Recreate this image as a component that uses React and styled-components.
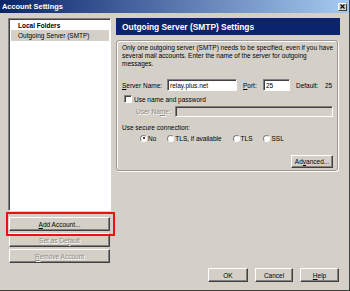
import styled, {createGlobalStyle} from 'styled-components'

const Global = createGlobalStyle`
    html, body {
        margin: 0;
        padding: 0;
        background: #d4d0c8;
    }
    body {
        font-family: "Liberation Sans", Arial, sans-serif;
    }
`

const Window = styled.div`
    width: 350px;
    height: 291px;
    box-sizing: border-box;
    display: flex;
    flex-direction: column;
    background: #d4d0c8;
    border-right: 1px solid #404040;
    border-bottom: 1px solid #404040;
    font-size: 6.5px;
    color: #000;
    overflow: hidden;
`

const TitleBar = styled.div`
    height: 13px;
    flex: none;
    display: flex;
    align-items: center;
    justify-content: space-between;
    padding: 0 2px 0 2px;
    background: linear-gradient(to right, #0a246a, #a6caf0);
    color: #fff;
    font-weight: bold;
    font-size: 7.4px;
`

const CloseBox = styled.div`
    width: 9px;
    height: 8px;
    box-sizing: border-box;
    background: #d4d0c8;
    border: 1px solid;
    border-color: #fff #404040 #404040 #fff;
    display: grid;
    place-items: center;
`

const Content = styled.div`
    flex: 1;
    display: flex;
    gap: 5px;
    padding: 5px 10px 8px 8px;
    min-height: 0;
`

const LeftColumn = styled.div`
    width: 103px;
    flex: none;
    display: flex;
    flex-direction: column;
`

const List = styled.div`
    flex: 1;
    background: #fff;
    border: 1px solid;
    border-color: #808080 #fff #fff #808080;
    box-shadow: inset 1px 1px #404040;
    padding: 2px 1px 0 2px;
`

const ListItem = styled.div`
    height: ${p => p.bold ? 9 : 11}px;
    line-height: ${p => p.bold ? 9 : 11}px;
    padding-left: 7px;
    font-weight: ${p => p.bold ? 'bold' : 'normal'};
    background: ${p => p.selected ? '#d4d0c8' : 'transparent'};
`

const ButtonStack = styled.div`
    display: flex;
    flex-direction: column;
    gap: 2px;
    margin: 6px 1px 19px 1px;
`

const Highlight = styled.div`
    position: relative;
`

const RedBox = styled.div`
    position: absolute;
    left: -3px;
    right: -5px;
    top: -5px;
    bottom: -5px;
    border: 2px solid #f01010;
    pointer-events: none;
`

const Button = styled.div`
    height: ${p => p.h || 14}px;
    width: ${p => p.w ? p.w + 'px' : 'auto'};
    box-sizing: border-box;
    display: flex;
    align-items: center;
    justify-content: center;
    background: #d4d0c8;
    border: 1px solid;
    border-color: #fff #404040 #404040 #fff;
    box-shadow: inset -1px -1px #808080;
    color: ${p => p.disabled ? '#8c8a84' : '#000'};
    text-shadow: ${p => p.disabled ? '1px 1px 0 #fff' : 'none'};
    flex: none;
`

const RightColumn = styled.div`
    flex: 1;
    display: flex;
    flex-direction: column;
`

const Header = styled.div`
    height: 17px;
    flex: none;
    background: #0c2470;
    color: #fff;
    font-size: 8.4px;
    font-weight: bold;
    display: flex;
    align-items: center;
    padding-left: 6px;
`

const Group = styled.div`
    margin: 5px 2px 0 0;
    border: 1px solid #9a9890;
    box-shadow: 1px 1px 0 #fff, inset 1px 1px 0 #fff;
    border-radius: 3px;
    padding: 3px 4px 2px 5px;
    display: flex;
    flex-direction: column;
`

const Para = styled.p`
    margin: 0;
    line-height: 8px;
    white-space: nowrap;
`

const Row = styled.div`
    display: flex;
    align-items: center;
    height: ${p => p.h || 8}px;
    margin-top: ${p => p.mt || 0}px;
    padding-left: ${p => p.pl || 0}px;
`

const Label = styled.span`
    width: ${p => p.w ? p.w + 'px' : 'auto'};
    margin-left: ${p => p.ml || 0}px;
    color: ${p => p.disabled ? '#8c8a84' : '#000'};
    text-shadow: ${p => p.disabled ? '1px 1px 0 #fff' : 'none'};
    flex: none;
    white-space: nowrap;
`

const Input = styled.div`
    height: ${p => p.h || 12}px;
    width: ${p => p.w ? p.w + 'px' : 'auto'};
    flex: ${p => p.w ? 'none' : 1};
    box-sizing: border-box;
    background: ${p => p.disabled ? '#d4d0c8' : '#fff'};
    border: 1px solid;
    border-color: #808080 #fff #fff #808080;
    box-shadow: inset 1px 1px #404040;
    padding-left: 2px;
    display: flex;
    align-items: center;
`

const Check = styled.div`
    width: 8px;
    height: 8px;
    box-sizing: border-box;
    background: #fff;
    border: 1px solid;
    border-color: #808080 #fff #fff #808080;
    box-shadow: inset 1px 1px #404040;
    margin: 0 2px 0 2px;
    flex: none;
`

const RadioGroup = styled.div`
    display: flex;
    align-items: center;
    gap: 11px;
`

const RadioItem = styled.label`
    display: flex;
    align-items: center;
    gap: 1px;
`

const Radio = styled.span`
    width: 7px;
    height: 7px;
    border-radius: 50%;
    box-sizing: border-box;
    background: #fff;
    border: 1px solid;
    border-color: #808080 #fff #fff #808080;
    display: grid;
    place-items: center;
    &::after {
        content: '';
        width: 2px;
        height: 2px;
        border-radius: 50%;
        background: ${p => p.checked ? '#000' : 'transparent'};
    }
`

const AdvancedRow = styled.div`
    display: flex;
    justify-content: flex-end;
    margin-top: 13px;
`

const Footer = styled.div`
    margin-top: auto;
    display: flex;
    justify-content: flex-end;
    gap: 7px;
    padding-right: 1px;
`

const U = styled.span`
    text-decoration: underline;
`

function CloseIcon() {
    return (
        <svg width="5" height="5" viewBox="0 0 5 5">
            <path d="M0.5 0.5 L4.5 4.5 M4.5 0.5 L0.5 4.5" stroke="#000" strokeWidth="1.1" />
        </svg>
    )
}

export default function App() {
    return (
        <Window>
            <Global />
            <TitleBar>
                <span>Account Settings</span>
                <CloseBox><CloseIcon /></CloseBox>
            </TitleBar>
            <Content>
                <LeftColumn>
                    <List>
                        <ListItem bold>Local Folders</ListItem>
                        <ListItem selected>Outgoing Server (SMTP)</ListItem>
                    </List>
                    <ButtonStack>
                        <Highlight>
                            <Button><span><U>A</U>dd Account...</span></Button>
                            <RedBox />
                        </Highlight>
                        <Button disabled><span>Set as De<U>f</U>ault</span></Button>
                        <Button disabled><span><U>R</U>emove Account</span></Button>
                    </ButtonStack>
                </LeftColumn>
                <RightColumn>
                    <Header>Outgoing Server (SMTP) Settings</Header>
                    <Group>
                        <Para>
                            Only one outgoing server (SMTP) needs to be specified, even if you have<br />
                            several mail accounts. Enter the name of the server for outgoing<br />
                            messages.
                        </Para>
                        <Row h={12} mt={11}>
                            <Label w={45}><U>S</U>erver Name:</Label>
                            <Input w={70}>relay.plus.net</Input>
                            <Label ml={6} w={20}><U>P</U>ort:</Label>
                            <Input w={27}>25</Input>
                            <Label ml={6} w={29}>Default:</Label>
                            <Label>25</Label>
                        </Row>
                        <Row mt={4} pl={0}>
                            <Check />
                            <Label>Use name and password</Label>
                        </Row>
                        <Row h={11} mt={3} pl={14}>
                            <Label w={39} disabled>User Na<U>m</U>e:</Label>
                            <Input h={11} disabled />
                        </Row>
                        <Row mt={6}>Use secure connection:</Row>
                        <Row mt={3} pl={18}>
                            <RadioGroup>
                                <RadioItem><Radio checked /><span>No</span></RadioItem>
                                <RadioItem><Radio /><span>TLS, if available</span></RadioItem>
                                <RadioItem><Radio /><span>TLS</span></RadioItem>
                                <RadioItem><Radio /><span>SSL</span></RadioItem>
                            </RadioGroup>
                        </Row>
                        <AdvancedRow>
                            <Button w={42} h={13}><span>Ad<U>v</U>anced...</span></Button>
                        </AdvancedRow>
                    </Group>
                    <Footer>
                        <Button w={40}>OK</Button>
                        <Button w={38}>Cancel</Button>
                        <Button w={39}><span><U>H</U>elp</span></Button>
                    </Footer>
                </RightColumn>
            </Content>
        </Window>
    )
}
